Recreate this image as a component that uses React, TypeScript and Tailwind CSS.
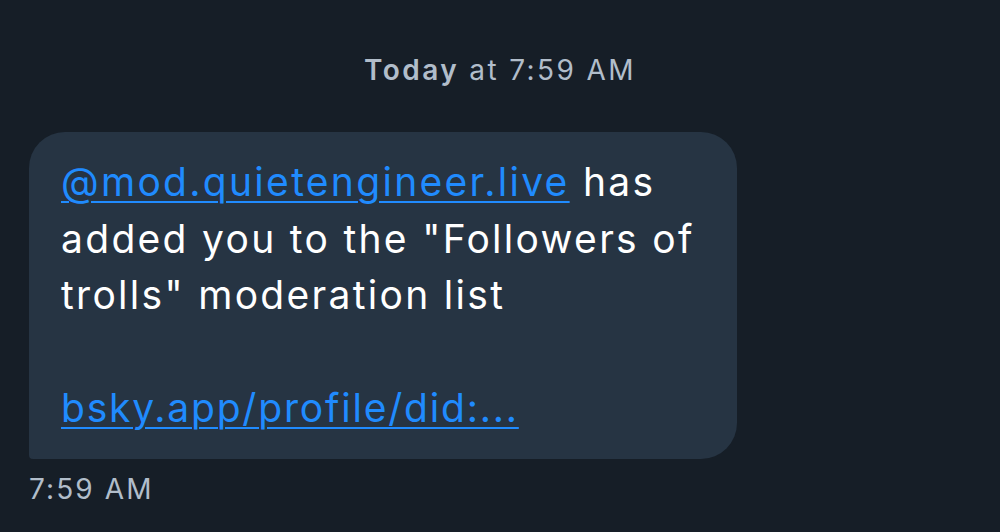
const App = () => {
    return (
        <div
            className="min-h-screen w-full bg-[#161e27] pt-[52px] px-[29px]"
            style={{ fontFamily: "Inter, 'Noto Sans', sans-serif" }}
        >
            <div className="text-center text-[28px] leading-[36px] tracking-[2.4px] text-[#b1bdca]">
                <span className="font-semibold">Today</span> at 7:59 AM
            </div>

            <div className="mt-[44px] w-[708px] rounded-[36px] rounded-bl-[4px] bg-[#263443] px-[32px] py-[22px]">
                <div className="text-[39px] leading-[56.5px] tracking-[2.3px] text-white">
                    <p>
                        <a className="text-[#208bfe] underline underline-offset-[5px] decoration-[2px]">
                            @mod.quietengineer.live
                        </a>{" "}
                        has added you to the "Followers of trolls" moderation list
                    </p>
                    <p>&nbsp;</p>
                    <p>
                        <a className="text-[#208bfe] underline underline-offset-[5px] decoration-[2px] tracking-[1.8px]">
                            bsky.app/profile/did:...
                        </a>
                    </p>
                </div>
            </div>

            <div className="mt-[12px] text-[28px] leading-[36px] tracking-[2.1px] text-[#b1bdca]">7:59 AM</div>
        </div>
    );
};

export default App;
